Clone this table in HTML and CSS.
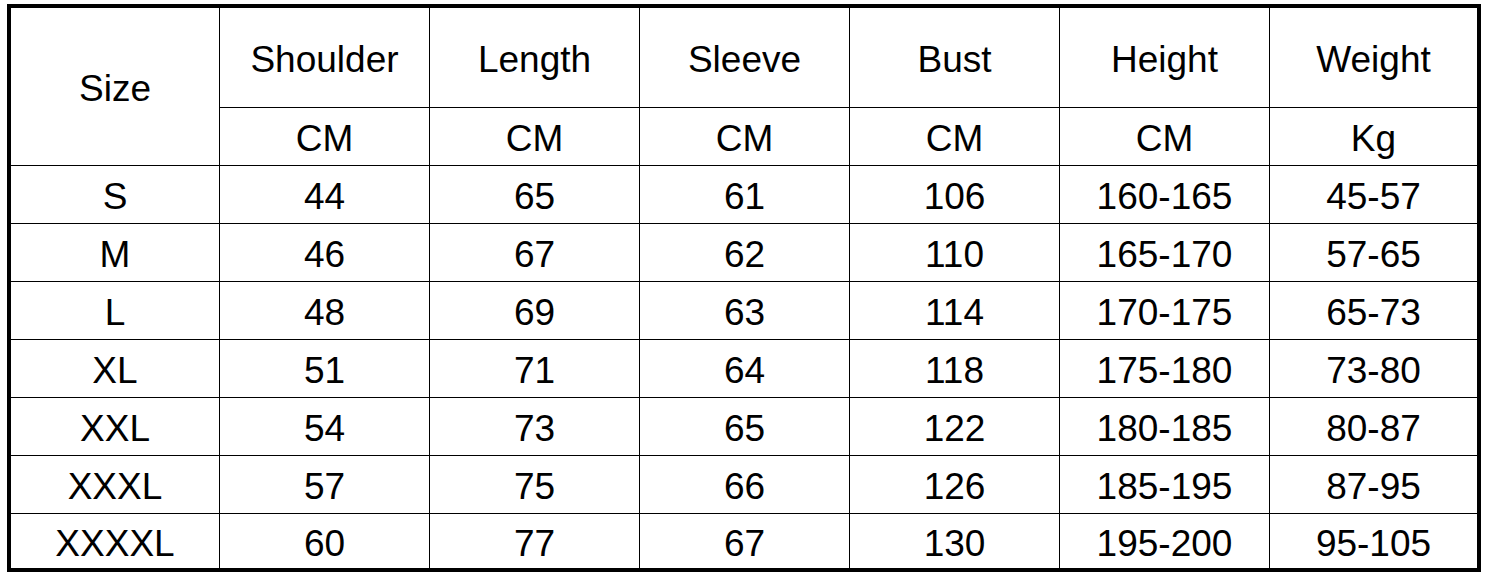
FILE: index.html
```html
<!DOCTYPE html>
<html>
<head>
<meta charset="utf-8">
<link rel="stylesheet" href="styles.css">
</head>
<body>
<div class="chart">
  <div class="cell size-head">Size</div>
  <div class="cell head line">Shoulder</div>
  <div class="cell head line">Length</div>
  <div class="cell head line">Sleeve</div>
  <div class="cell head line">Bust</div>
  <div class="cell head line">Height</div>
  <div class="cell head line">Weight</div>

  <div class="cell top line">CM</div>
  <div class="cell top line">CM</div>
  <div class="cell top line">CM</div>
  <div class="cell top line">CM</div>
  <div class="cell top line">CM</div>
  <div class="cell top line">Kg</div>

  <div class="cell top">S</div><div class="cell top line">44</div><div class="cell top line">65</div><div class="cell top line">61</div><div class="cell top line">106</div><div class="cell top line">160-165</div><div class="cell top line">45-57</div>
  <div class="cell top">M</div><div class="cell top line">46</div><div class="cell top line">67</div><div class="cell top line">62</div><div class="cell top line">110</div><div class="cell top line">165-170</div><div class="cell top line">57-65</div>
  <div class="cell top">L</div><div class="cell top line">48</div><div class="cell top line">69</div><div class="cell top line">63</div><div class="cell top line">114</div><div class="cell top line">170-175</div><div class="cell top line">65-73</div>
  <div class="cell top">XL</div><div class="cell top line">51</div><div class="cell top line">71</div><div class="cell top line">64</div><div class="cell top line">118</div><div class="cell top line">175-180</div><div class="cell top line">73-80</div>
  <div class="cell top">XXL</div><div class="cell top line">54</div><div class="cell top line">73</div><div class="cell top line">65</div><div class="cell top line">122</div><div class="cell top line">180-185</div><div class="cell top line">80-87</div>
  <div class="cell top">XXXL</div><div class="cell top line">57</div><div class="cell top line">75</div><div class="cell top line">66</div><div class="cell top line">126</div><div class="cell top line">185-195</div><div class="cell top line">87-95</div>
  <div class="cell top">XXXXL</div><div class="cell top line">60</div><div class="cell top line">77</div><div class="cell top line">67</div><div class="cell top line">130</div><div class="cell top line">195-200</div><div class="cell top line">95-105</div>
</div>
</body>
</html>
```
FILE: styles.css
```css
html, body {
  margin: 0;
  background: #ffffff;
}
body {
  padding: 4px 0 0 7px;
  font-family: "Liberation Sans", Arial, sans-serif;
  color: #000000;
}
.chart {
  box-sizing: border-box;
  width: 1474px;
  border: 4px solid #000000;
  display: grid;
  grid-template-columns: 208px repeat(5, 210px) 208px;
  grid-template-rows: 99px repeat(7, 58px) 55px;
}
.cell {
  box-sizing: border-box;
  display: flex;
  align-items: center;
  justify-content: center;
  padding-top: 4px;
  font-size: 37px;
  line-height: 1;
  white-space: nowrap;
}
.size-head {
  grid-row: 1 / span 2;
}
.line {
  border-left: 1px solid #000000;
}
.top {
  border-top: 1px solid #000000;
}
```
